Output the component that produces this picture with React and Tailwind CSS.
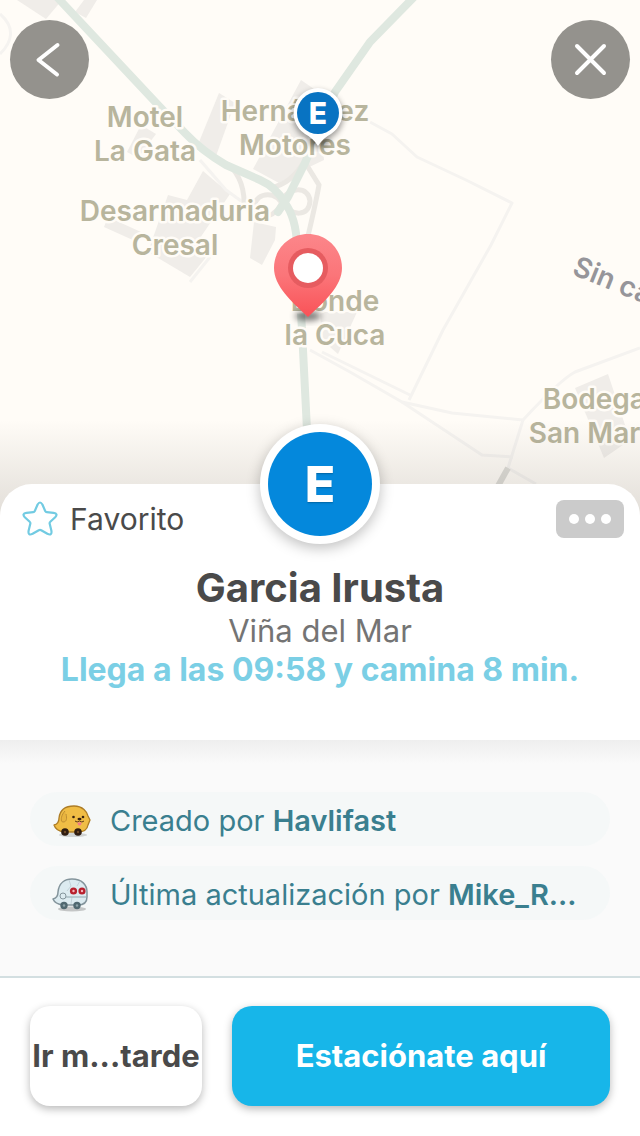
import { useState } from 'react'

const LUGARES = [
  { lineas: ['Motel', 'La Gata'],          x: 145, y: 127 },
  { lineas: ['Hernández', 'Motores'],      x: 295, y: 121 },
  { lineas: ['Desarmaduria', 'Cresal'],    x: 175, y: 221 },
  { lineas: ['Donde', 'la Cuca'],          x: 335, y: 311 },
  { lineas: ['Bodegas', 'San Martin'],     x: 602, y: 409 },
]

function Mapa() {
  return (
    <svg
      className="absolute inset-0 w-full h-full"
      viewBox="0 0 640 516"
      preserveAspectRatio="xMidYMax slice"
      aria-hidden="true"
    >
      <defs>
        <linearGradient id="pinRojo" x1="0" y1="0" x2="0" y2="1">
          <stop offset="0" stopColor="#fc868a" />
          <stop offset="0.5" stopColor="#fb7579" />
          <stop offset="1" stopColor="#f95257" />
        </linearGradient>
        <filter id="sombra" x="-50%" y="-50%" width="200%" height="200%">
          <feGaussianBlur stdDeviation="3" />
        </filter>
      </defs>

      <rect width="640" height="516" fill="#fffcf7" />

      {/* Edificios */}
      <g fill="#f0ede9">
        <path d="M17 0 L46 19 L62 0 Z" />
        <path d="M75 12 L84 0 L97 0 L86 18 Z" />
        <path d="M219 93 L235 103 L216 156 L199 142 Z" />
        <path d="M141 125 L156 134 L138 158 L127 152 Z" />
        <path d="M301 80 L317 91 L324 160 L303 170 L279 183 L253 169 Z" />
        <path d="M203 171 L230 194 L200 238 L212 250 L190 277 L148 252 L168 195 L187 200 Z" />
        <path d="M108 217 L141 232 L135 241 L104 227 Z" />
        <path d="M254 222 L276 227 L275 240 L262 265 L250 258 Z" />
        <path d="M320 312 L357 312 L338 354 L322 340 Z" />
        <path d="M575 388 L608 374 L630 440 L604 458 Z" />
      </g>

      {/* Caminos secundarios */}
      <g fill="none" stroke="#f5f3f0" strokeWidth="3" strokeLinejoin="round">
        <path d="M0 54 C12 42 16 28 0 14" />
        <path d="M44 22 Q57 28 56 58" />
        <path d="M200 160 L226 190 L248 206" />
        <path d="M190 282 L210 257" />
        <path d="M370 122 L392 134 L417 157 L466 180 L512 203 L491 245 L443 330 L409 400" />
        <path d="M310 350 L350 372 L402 402 L452 413 L523 420 Q560 380 575 372 L640 348" />
        <path d="M322 352 L410 395" />
        <path d="M402 402 L482 455 L513 457" />
        <path d="M523 420 L508 468 L536 484" />
      </g>
      <path d="M508 468 L498 486" stroke="#dddcd7" strokeWidth="6" fill="none" />

      {/* Enlace y rampas */}
      <g fill="none" stroke="#ebe8e3" strokeWidth="5">
        <path d="M228 164 Q246 180 244 210" />
        <path d="M270 188 Q292 184 305 160" />
        <path d="M306 164 L319 185 Q316 202 308 236" />
        <path d="M281 202 C288 186 309 186 310 201 C309 217 292 217 281 202" />
        <path d="M281 202 C272 188 250 196 256 210 C264 222 276 214 281 204" />
      </g>

      {/* Autopista */}
      <g fill="none" stroke="#dfe8e0" strokeWidth="8" strokeLinejoin="round" strokeLinecap="round">
        <path d="M56 -4 L160 107 L185 133 Q202 151 226 165 L260 180 Q276 187 285 203 Q296 218 297 245 L302 330 L307 430" />
        <path d="M415 -4 L370 42 L335 92 L305 163 L288 197 L278 212" />
      </g>

      <g
        className="font-['Inter',sans-serif] font-semibold"
        fontSize="28"
        fill="#b8b59d"
        stroke="#fffcf7"
        strokeWidth="5"
        strokeLinejoin="round"
        paintOrder="stroke"
        textAnchor="middle"
      >
        {LUGARES.map(l => (
          <text key={l.lineas[0]}>
            <tspan x={l.x} y={l.y}>{l.lineas[0]}</tspan>
            <tspan x={l.x} y={l.y + 34}>{l.lineas[1]}</tspan>
          </text>
        ))}
        <text transform="translate(571 274) rotate(22)" textAnchor="start" fill="#96959a">
          Sin calle
        </text>
      </g>

      {/* Pin estacionamiento */}
      <ellipse cx="319" cy="142" rx="10" ry="5" fill="#000" opacity="0.45" filter="url(#sombra)" />
      <circle cx="318" cy="116" r="25" fill="#000" opacity="0.4" filter="url(#sombra)" />
      <path d="M318 88 A25 25 0 0 1 331 134 Q323 138 318 146 Q313 138 305 134 A25 25 0 0 1 318 88 Z" fill="#fff" />
      <circle cx="318" cy="113" r="21" fill="#0873c2" />
      <text
        x="318"
        y="124"
        textAnchor="middle"
        fontSize="30"
        fill="#fff"
        className="font-['Inter',sans-serif] font-extrabold"
      >
        E
      </text>

      {/* Pin destino */}
      <ellipse cx="308" cy="316" rx="13" ry="5" fill="#000" opacity="0.5" filter="url(#sombra)" />
      <path
        d="M308 234 C327 234 342 249 342 268 C342 286 325 301 308 317 C291 301 274 286 274 268 C274 249 289 234 308 234 Z"
        fill="url(#pinRojo)"
      />
      <circle cx="308" cy="268" r="20" fill="#e65c60" />
      <circle cx="308" cy="268" r="15" fill="#fff" />
    </svg>
  )
}

function WazerPerro() {
  return (
    <svg width="40" height="36" viewBox="0 0 40 36" aria-hidden="true">
      <ellipse cx="21" cy="32" rx="14" ry="2" fill="#000" opacity="0.15" />
      <path
        d="M2 22 Q7 21 7 15 C8 6 15 3 22 3 C31 3 35 9 36 13 L38 17 L36 22 C35 28 31 29 26 29 L12 29 Q4 28 2 22 Z"
        fill="#f0bd45"
        stroke="#ad7d26"
        strokeWidth="1.3"
        strokeLinejoin="round"
      />
      <path d="M13 8 C9 12 8 19 11 19 C15 19 15 15 14 11" fill="#e8b43f" stroke="#c08f33" strokeWidth="1" />
      <circle cx="21.500" cy="14" r="1.300" fill="#3a2411" />
      <circle cx="31" cy="14" r="1.300" fill="#3a2411" />
      <ellipse cx="27.500" cy="16" rx="2" ry="1.300" fill="#3a2411" />
      <path d="M23 18 Q25 20 27.500 18 Q30 20 32 18" fill="none" stroke="#5a3818" strokeWidth="1" />
      <path d="M25.500 19.500 h4 q0 3 -2 3 q-2 0 -2 -3" fill="#f2798a" />
      <circle cx="13" cy="29" r="3.800" fill="#2f1c10" />
      <circle cx="26" cy="29" r="3.800" fill="#2f1c10" />
      <circle cx="13" cy="29" r="1.200" fill="#6d4a28" />
      <circle cx="26" cy="29" r="1.200" fill="#6d4a28" />
    </svg>
  )
}

function WazerRobot() {
  return (
    <svg width="40" height="36" viewBox="0 0 40 36" aria-hidden="true">
      <ellipse cx="20" cy="32" rx="14" ry="2.500" fill="#000" opacity="0.2" />
      <path
        d="M1 22 Q6 21 6 15 C7 6 13 2 20 2 C30 2 35 8 35 15 L35 20 C35 26 31 28 26 28 L11 28 Q3 27 1 22 Z"
        fill="#dcebf0"
        stroke="#84959c"
        strokeWidth="1.5"
        strokeLinejoin="round"
      />
      <path d="M17 3 L19 9 L15 14 M28 4 L25 9 M20 20 L19 27" fill="none" stroke="#c3d3d9" strokeWidth="1" />
      <path d="M13 20 H34" stroke="#9fb2b9" strokeWidth="1.2" />
      <circle cx="11" cy="19" r="3" fill="#dcebf0" stroke="#84959c" strokeWidth="1" />
      <circle cx="21.500" cy="14" r="3.600" fill="#b8202d" />
      <circle cx="30" cy="14" r="3.600" fill="#b8202d" />
      <circle cx="21.500" cy="14" r="1.200" fill="#f3b6bc" />
      <circle cx="30" cy="14" r="1.200" fill="#f3b6bc" />
      <circle cx="12" cy="28.500" r="3.700" fill="#4f6870" />
      <circle cx="25" cy="28.500" r="3.700" fill="#4f6870" />
      <circle cx="12" cy="28.500" r="1.200" fill="#8da3aa" />
      <circle cx="25" cy="28.500" r="1.200" fill="#8da3aa" />
    </svg>
  )
}

function Autor({ icono, texto, nombre }) {
  return (
    <li className="flex items-center gap-[18px] h-[54px] pl-[22px] pr-6 pt-1 rounded-full bg-[#f5f8f8] text-[#3a7f8f] text-[29px] whitespace-nowrap">
      <span className="shrink-0">{icono}</span>
      <span className="truncate">
        {texto} <strong className="font-semibold">{nombre}</strong>
      </span>
    </li>
  )
}

export default function App() {
  const [favorito, setFavorito] = useState(false)

  return (
    <div className="min-h-screen flex flex-col bg-white font-['Inter',sans-serif] overflow-x-hidden">
      {/* Mapa */}
      <section className="relative flex-1 min-h-80 -mb-8 overflow-hidden">
        <Mapa />
        <div className="absolute inset-x-0 bottom-0 h-24 bg-linear-to-b from-transparent to-[#3c3228]/15" />
        <div className="relative flex justify-between px-[10px] pt-5">
          <button aria-label="Volver" className="size-[79px] rounded-full bg-[#94928d] flex items-center justify-center">
            <svg width="40" height="40" viewBox="0 0 40 40" fill="none" stroke="#fff" strokeWidth="4" strokeLinecap="round" strokeLinejoin="round">
              <path d="M27.500 5 L8.500 20 L27 34.500" />
            </svg>
          </button>
          <button aria-label="Cerrar" className="size-[79px] rounded-full bg-[#94928d] flex items-center justify-center">
            <svg width="40" height="40" viewBox="0 0 40 40" fill="none" stroke="#fff" strokeWidth="4" strokeLinecap="round">
              <path d="M6 6 L33 33 M33 6 L6 33" />
            </svg>
          </button>
        </div>
      </section>

      {/* Ficha */}
      <section className="relative bg-white rounded-t-[32px] h-64">
        <div className="absolute left-1/2 top-0 -translate-x-1/2 -translate-y-1/2 size-30 rounded-full bg-white p-2 shadow-[0_4px_14px_rgba(0,0,0,0.25)]">
          <div className="size-full rounded-full bg-[#0488dc] text-white font-extrabold text-[50px] flex items-center justify-center text-shadow-sm">
            E
          </div>
        </div>

        <div className="flex items-center justify-between px-4 pt-4 pl-[22px]">
          <button
            onClick={() => setFavorito(!favorito)}
            aria-pressed={favorito}
            className="flex items-center gap-3 text-[30px] leading-[38px] text-[#4a4a4a]"
          >
            <svg width="36" height="36" viewBox="0 0 36 36" fill={favorito ? '#72cbe2' : 'none'} stroke="#72cbe2" strokeWidth="2.2" strokeLinejoin="round">
              <path d="M15.600 3.500 Q18 -0.500 20.400 3.500 L23.200 10 Q23.700 11 24.800 11.100 L31.500 11.800 Q36.500 12.600 33.200 16.200 L28.300 20.800 Q27.400 21.600 27.700 22.700 L29.400 29.800 Q30.200 35 25.400 32.800 L19.200 29.200 Q18 28.500 16.800 29.200 L10.600 32.800 Q5.800 35 6.600 29.800 L8.300 22.700 Q8.600 21.600 7.700 20.800 L2.800 16.200 Q-0.500 12.600 4.500 11.800 L11.200 11.100 Q12.300 11 12.800 10 Z" />
            </svg>
            Favorito
          </button>
          <button aria-label="Más opciones" className="w-17 h-[38px] rounded-lg bg-[#cbcbcb] flex items-center justify-center gap-[6px]">
            <span className="size-[10px] rounded-full bg-white" />
            <span className="size-[10px] rounded-full bg-white" />
            <span className="size-[10px] rounded-full bg-white" />
          </button>
        </div>

        <div className="text-center pt-6">
          <h1 className="text-[40px] leading-[52px] font-bold text-[#4a4a4a]">Garcia Irusta</h1>
          <p className="text-[31px] leading-[34px] text-[#747474]">Viña del Mar</p>
          <p className="text-[32px] leading-[44px] font-bold text-[#7bcfe5]">Llega a las 09:58 y camina 8 min.</p>
        </div>
      </section>

      {/* Autores */}
      <section className="bg-[#fafafa]">
        <div className="h-6 bg-linear-to-b from-[#eeeeee] to-[#fafafa]" />
        <ul className="flex flex-col gap-5 px-[30px] pt-7 pb-14">
          <Autor icono={<WazerPerro />} texto="Creado por" nombre="Havlifast" />
          <Autor icono={<WazerRobot />} texto="Última actualización por" nombre="Mike_R..." />
        </ul>
      </section>

      {/* Acciones */}
      <footer className="flex gap-[30px] px-[30px] pt-7 pb-[30px] border-t-2 border-[#d3dfe1] bg-white text-[31px] font-bold whitespace-nowrap">
        <button className="w-43 h-25 shrink-0 rounded-[20px] bg-white text-[#4a4a4a] flex items-center justify-center shadow-[0_3px_8px_rgba(0,0,0,0.28)]">
          Ir m...tarde
        </button>
        <button className="flex-1 h-25 rounded-[20px] bg-[#17b6e9] text-white shadow-[0_3px_8px_rgba(0,0,0,0.28)]">
          Estaciónate aquí
        </button>
      </footer>
    </div>
  )
}
